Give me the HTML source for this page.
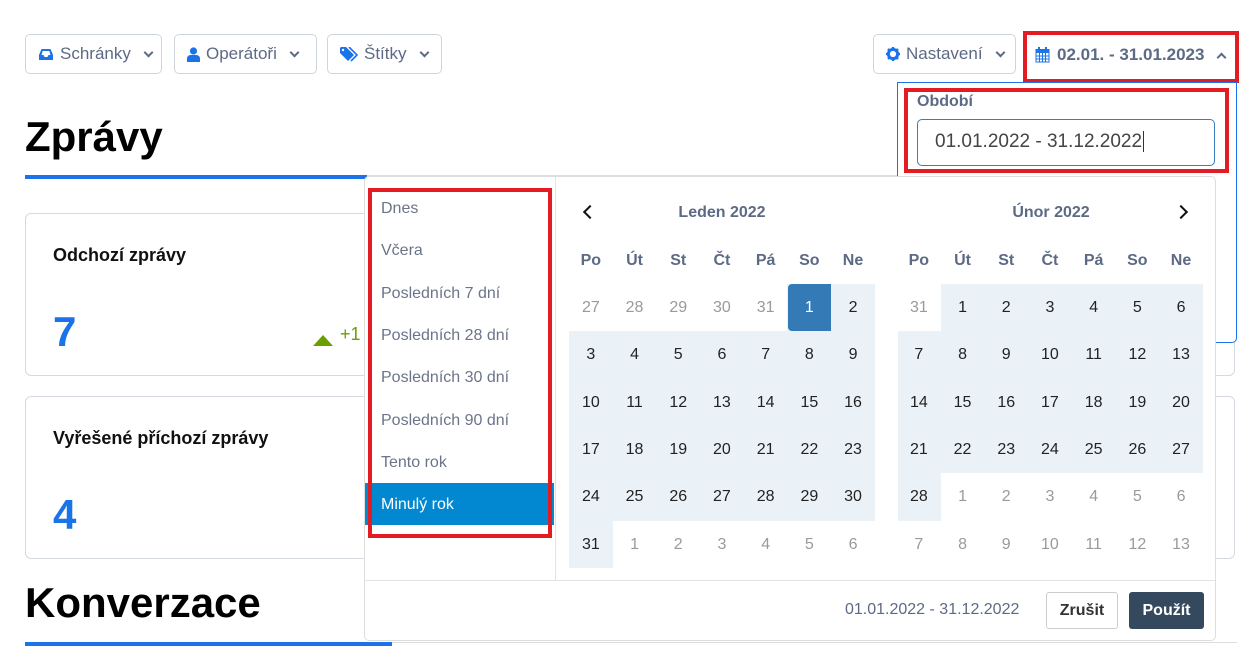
<!DOCTYPE html>
<html><head><meta charset="utf-8"><style>
*{box-sizing:border-box;margin:0;padding:0}
body{width:1254px;height:661px;overflow:hidden;background:#fff;font-family:"Liberation Sans","DejaVu Sans",sans-serif;position:relative;color:#111}
.a{position:absolute}
.btn{position:absolute;top:34px;height:40px;border:1px solid #cfd5dd;border-radius:5px;background:#fff;color:#5d6a85;font-size:17px;display:flex;align-items:center;padding-left:12px}
.chev{display:inline-block;width:7px;height:7px;border-right:2px solid #5d6a85;border-bottom:2px solid #5d6a85;transform:rotate(45deg);margin-left:14px;margin-top:-4px}
.red{position:absolute;border:4px solid #e31b23}
h1{position:absolute;left:25px;font-size:42px;font-weight:bold;color:#000}
.card{position:absolute;left:25px;width:1210px;height:163px;border:1px solid #d5d9e0;border-radius:6px;background:#fff}
.card .t{position:absolute;left:27px;top:31px;font-size:18px;font-weight:bold}
.card .n{position:absolute;left:27px;top:94px;font-size:42px;font-weight:bold;color:#1a73e8}
.rng{position:absolute;left:381px;font-size:16px;color:#6b7489}
.c{position:absolute;width:43.7px;height:47.3px;display:flex;align-items:center;justify-content:center;font-size:16px;color:#222}
.m{color:#9a9a9a}
.bg{background:#eaf2f8}
.hd{font-weight:bold;color:#5d6a85}
</style></head><body>

<div class="btn" style="left:25px;width:137px"><svg width="16" height="13" viewBox="0 0 16 13"><path d="M1 7 L3.5 1 H12.5 L15 7 V12 H1Z M3.5 7 H5.5 L6.5 9 H9.5 L10.5 7 H12.5 L11.3 3 H4.7Z" fill="#1a73e8" fill-rule="evenodd"/></svg><span style="margin-left:6px">Schránky</span><span class="chev"></span></div>
<div class="btn" style="left:174px;width:143px"><svg width="13" height="15" viewBox="0 0 13 15"><circle cx="6.5" cy="4" r="3.6" fill="#1a73e8"/><path d="M0 15 V12 Q0 8 4 8 H9 Q13 8 13 12 V15Z" fill="#1a73e8"/></svg><span style="margin-left:6px">Operátoři</span><span class="chev"></span></div>
<div class="btn" style="left:327px;width:115px"><svg width="18" height="15" viewBox="0 0 18 15"><path d="M0 1 V6 L8 14 L14 8 L6 0 H1Z" fill="#1a73e8"/><circle cx="3" cy="3" r="1.2" fill="#fff"/><path d="M9 0 L17 8 L11 14" stroke="#1a73e8" stroke-width="1.6" fill="none"/></svg><span style="margin-left:6px">Štítky</span><span class="chev"></span></div>
<div class="btn" style="left:873px;width:143px"><svg width="14" height="14" viewBox="0 0 14 14"><circle cx="7" cy="7" r="4.6" fill="none" stroke="#1a73e8" stroke-width="3"/><path d="M7 0V3M7 11V14M0 7H3M11 7H14M2 2L4 4M10 10L12 12M12 2L10 4M4 10L2 12" stroke="#1a73e8" stroke-width="2.4"/></svg><span style="margin-left:6px">Nastavení</span><span class="chev"></span></div>
<div class="a" style="left:1035px;top:45px;display:flex;align-items:center;font-size:17px;font-weight:bold;color:#5d6a85"><svg width="15" height="16" viewBox="0 0 15 16"><rect x="0.5" y="2" width="14" height="13.5" fill="#1a73e8"/><path d="M1.5 6H13.5V14.5H1.5Z" fill="#fff"/><path d="M1.5 9H13.5M1.5 12H13.5M4.5 6V14.5M7.5 6V14.5M10.5 6V14.5" stroke="#1a73e8" stroke-width="1"/><rect x="3" y="0" width="2" height="4" fill="#1a73e8"/><rect x="10" y="0" width="2" height="4" fill="#1a73e8"/></svg><span style="margin-left:7px">02.01. - 31.01.2023</span><span class="chev" style="transform:rotate(225deg);margin-left:14px;margin-top:4px"></span></div>
<div class="red" style="left:1023px;top:31px;width:216px;height:52px"></div>

<h1 style="top:113px">Zprávy</h1>
<div class="a" style="left:25px;top:175px;width:1212px;height:1px;background:#ddd"></div>
<div class="a" style="left:25px;top:175px;width:342px;height:4px;background:#1a73e8"></div>

<div class="card" style="top:213px"><div class="t">Odchozí zprávy</div><div class="n">7</div>
<div class="a" style="left:287px;top:121px;width:0;height:0;border-left:10px solid transparent;border-right:10px solid transparent;border-bottom:11px solid #6a9f00"></div>
<div class="a" style="left:314px;top:110px;font-size:18px;color:#6a9f00">+1</div></div>
<div class="card" style="top:396px"><div class="t">Vyřešené příchozí zprávy</div><div class="n">4</div></div>

<h1 style="top:579px">Konverzace</h1>
<div class="a" style="left:25px;top:642px;width:1212px;height:1px;background:#ddd"></div>
<div class="a" style="left:25px;top:642px;width:367px;height:4px;background:#1a73e8"></div>

<div class="a" style="left:897px;top:82px;width:340px;height:261px;border:1px solid #1a73e8;border-radius:0 0 5px 5px;background:#fff"></div>
<div class="a" style="left:917px;top:93px;font-size:16px;font-weight:bold;color:#5d6a85">Období</div>
<div class="a" style="left:917px;top:119px;width:298px;height:47px;border:1px solid #3b7bbf;border-radius:5px;font-size:19px;color:#444;padding:11px 0 0 17px">01.01.2022 - 31.12.2022<span style="border-left:1px solid #333;margin-left:1px"></span></div>
<div class="red" style="left:904px;top:88px;width:325px;height:85px"></div>

<div class="a" style="left:364px;top:176px;width:852px;height:465px;border:1px solid #ddd;border-radius:5px;background:#fff"></div>
<div class="a" style="left:555px;top:177px;width:1px;height:403px;background:#e3e3e3"></div>
<div class="a" style="left:365px;top:580px;width:850px;height:1px;background:#e3e3e3"></div>
<div class="a" style="left:365px;top:483px;width:189px;height:42px;background:#0288d1"></div>
<div class="rng" style="top:200px">Dnes</div>
<div class="rng" style="top:242px">Včera</div>
<div class="rng" style="top:285px">Posledních 7 dní</div>
<div class="rng" style="top:327px">Posledních 28 dní</div>
<div class="rng" style="top:369px">Posledních 30 dní</div>
<div class="rng" style="top:412px">Posledních 90 dní</div>
<div class="rng" style="top:454px">Tento rok</div>
<div class="rng" style="top:496px;color:#fff">Minulý rok</div>
<div class="red" style="left:368px;top:188px;width:184px;height:350px"></div>

<div class="a" style="left:585px;top:207px;width:10px;height:10px;border-left:2px solid #111;border-bottom:2px solid #111;transform:rotate(45deg)"></div>
<div class="a" style="left:1176px;top:207px;width:10px;height:10px;border-right:2px solid #111;border-top:2px solid #111;transform:rotate(45deg)"></div>
<div class="a" style="left:569px;top:204px;width:306px;text-align:center;font-size:16px;font-weight:bold;color:#5d6a85">Leden 2022</div>
<div class="a" style="left:898px;top:204px;width:306px;text-align:center;font-size:16px;font-weight:bold;color:#5d6a85">Únor 2022</div>

<!-- calendar 1 -->
<div class="a" style="left:569px;top:236px">
<div class="c hd" style="left:0;top:1px">Po</div><div class="c hd" style="left:43.7px;top:1px">Út</div><div class="c hd" style="left:87.4px;top:1px">St</div><div class="c hd" style="left:131.1px;top:1px">Čt</div><div class="c hd" style="left:174.8px;top:1px">Pá</div><div class="c hd" style="left:218.5px;top:1px">So</div><div class="c hd" style="left:262.2px;top:1px">Ne</div>
<div class="a bg" style="left:218px;top:48px;width:88px;height:47px"></div>
<div class="a bg" style="left:0;top:95px;width:306px;height:190px"></div>
<div class="a bg" style="left:0;top:285px;width:44px;height:47px"></div>
<div class="a" style="left:219px;top:48px;width:43px;height:47px;background:#337ab7;border-radius:4px 0 0 4px"></div>
<div class="c m" style="left:0;top:48px">27</div><div class="c m" style="left:43.7px;top:48px">28</div><div class="c m" style="left:87.4px;top:48px">29</div><div class="c m" style="left:131.1px;top:48px">30</div><div class="c m" style="left:174.8px;top:48px">31</div><div class="c" style="left:218.5px;top:48px;color:#fff">1</div><div class="c" style="left:262.2px;top:48px">2</div>
<div class="c" style="left:0;top:95px">3</div><div class="c" style="left:43.7px;top:95px">4</div><div class="c" style="left:87.4px;top:95px">5</div><div class="c" style="left:131.1px;top:95px">6</div><div class="c" style="left:174.8px;top:95px">7</div><div class="c" style="left:218.5px;top:95px">8</div><div class="c" style="left:262.2px;top:95px">9</div>
<div class="c" style="left:0;top:143px">10</div><div class="c" style="left:43.7px;top:143px">11</div><div class="c" style="left:87.4px;top:143px">12</div><div class="c" style="left:131.1px;top:143px">13</div><div class="c" style="left:174.8px;top:143px">14</div><div class="c" style="left:218.5px;top:143px">15</div><div class="c" style="left:262.2px;top:143px">16</div>
<div class="c" style="left:0;top:190px">17</div><div class="c" style="left:43.7px;top:190px">18</div><div class="c" style="left:87.4px;top:190px">19</div><div class="c" style="left:131.1px;top:190px">20</div><div class="c" style="left:174.8px;top:190px">21</div><div class="c" style="left:218.5px;top:190px">22</div><div class="c" style="left:262.2px;top:190px">23</div>
<div class="c" style="left:0;top:237px">24</div><div class="c" style="left:43.7px;top:237px">25</div><div class="c" style="left:87.4px;top:237px">26</div><div class="c" style="left:131.1px;top:237px">27</div><div class="c" style="left:174.8px;top:237px">28</div><div class="c" style="left:218.5px;top:237px">29</div><div class="c" style="left:262.2px;top:237px">30</div>
<div class="c" style="left:0;top:285px">31</div><div class="c m" style="left:43.7px;top:285px">1</div><div class="c m" style="left:87.4px;top:285px">2</div><div class="c m" style="left:131.1px;top:285px">3</div><div class="c m" style="left:174.8px;top:285px">4</div><div class="c m" style="left:218.5px;top:285px">5</div><div class="c m" style="left:262.2px;top:285px">6</div>
</div>

<!-- calendar 2 -->
<div class="a" style="left:897px;top:236px">
<div class="c hd" style="left:0;top:1px">Po</div><div class="c hd" style="left:43.7px;top:1px">Út</div><div class="c hd" style="left:87.4px;top:1px">St</div><div class="c hd" style="left:131.1px;top:1px">Čt</div><div class="c hd" style="left:174.8px;top:1px">Pá</div><div class="c hd" style="left:218.5px;top:1px">So</div><div class="c hd" style="left:262.2px;top:1px">Ne</div>
<div class="a bg" style="left:44px;top:48px;width:262px;height:47px"></div>
<div class="a bg" style="left:1px;top:95px;width:305px;height:142px"></div>
<div class="a bg" style="left:1px;top:237px;width:43px;height:48px"></div>
<div class="c m" style="left:0;top:48px">31</div><div class="c" style="left:43.7px;top:48px">1</div><div class="c" style="left:87.4px;top:48px">2</div><div class="c" style="left:131.1px;top:48px">3</div><div class="c" style="left:174.8px;top:48px">4</div><div class="c" style="left:218.5px;top:48px">5</div><div class="c" style="left:262.2px;top:48px">6</div>
<div class="c" style="left:0;top:95px">7</div><div class="c" style="left:43.7px;top:95px">8</div><div class="c" style="left:87.4px;top:95px">9</div><div class="c" style="left:131.1px;top:95px">10</div><div class="c" style="left:174.8px;top:95px">11</div><div class="c" style="left:218.5px;top:95px">12</div><div class="c" style="left:262.2px;top:95px">13</div>
<div class="c" style="left:0;top:143px">14</div><div class="c" style="left:43.7px;top:143px">15</div><div class="c" style="left:87.4px;top:143px">16</div><div class="c" style="left:131.1px;top:143px">17</div><div class="c" style="left:174.8px;top:143px">18</div><div class="c" style="left:218.5px;top:143px">19</div><div class="c" style="left:262.2px;top:143px">20</div>
<div class="c" style="left:0;top:190px">21</div><div class="c" style="left:43.7px;top:190px">22</div><div class="c" style="left:87.4px;top:190px">23</div><div class="c" style="left:131.1px;top:190px">24</div><div class="c" style="left:174.8px;top:190px">25</div><div class="c" style="left:218.5px;top:190px">26</div><div class="c" style="left:262.2px;top:190px">27</div>
<div class="c" style="left:0;top:237px">28</div><div class="c m" style="left:43.7px;top:237px">1</div><div class="c m" style="left:87.4px;top:237px">2</div><div class="c m" style="left:131.1px;top:237px">3</div><div class="c m" style="left:174.8px;top:237px">4</div><div class="c m" style="left:218.5px;top:237px">5</div><div class="c m" style="left:262.2px;top:237px">6</div>
<div class="c m" style="left:0;top:285px">7</div><div class="c m" style="left:43.7px;top:285px">8</div><div class="c m" style="left:87.4px;top:285px">9</div><div class="c m" style="left:131.1px;top:285px">10</div><div class="c m" style="left:174.8px;top:285px">11</div><div class="c m" style="left:218.5px;top:285px">12</div><div class="c m" style="left:262.2px;top:285px">13</div>
</div>

<div class="a" style="left:845px;top:601px;font-size:16px;color:#5d6a85">01.01.2022 - 31.12.2022</div>
<div class="a" style="left:1046px;top:592px;width:72px;height:37px;border:1px solid #ccc;border-radius:3px;font-size:16px;font-weight:bold;color:#333;display:flex;align-items:center;justify-content:center">Zrušit</div>
<div class="a" style="left:1129px;top:592px;width:75px;height:37px;background:#34495e;border-radius:3px;font-size:16px;font-weight:bold;color:#fff;display:flex;align-items:center;justify-content:center">Použít</div>
</body></html>
